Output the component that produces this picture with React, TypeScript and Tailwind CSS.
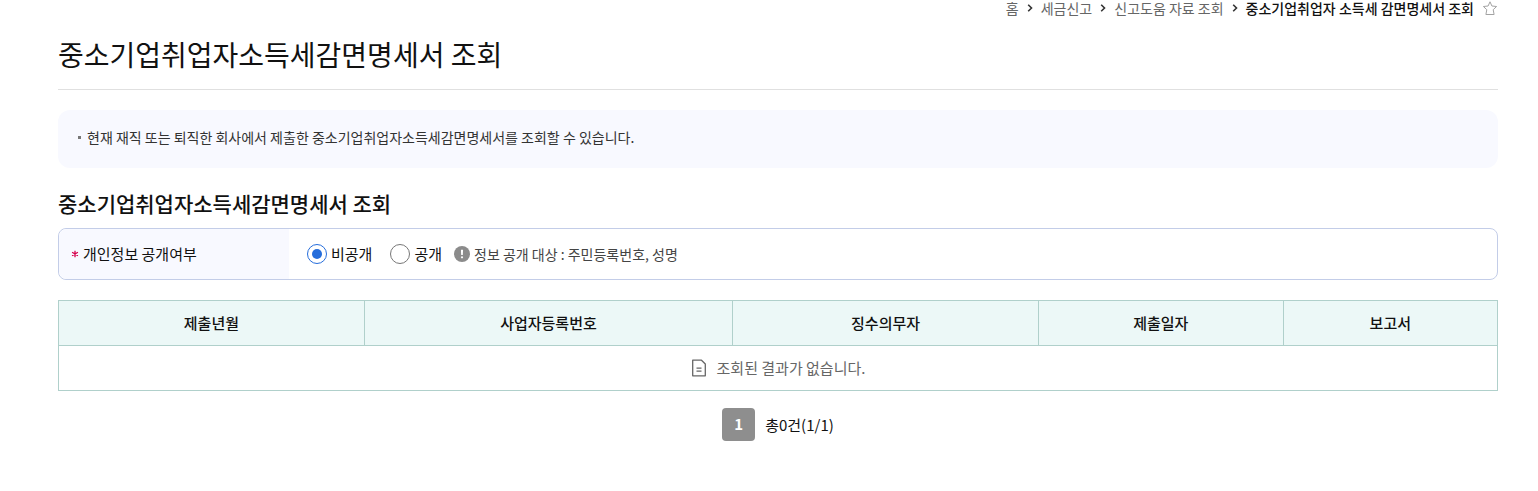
import { Fragment, useState } from "react";

const breadcrumbs = ["홈", "세금신고", "신고도움 자료 조회"];

const columns = [
  { label: "제출년월", width: "w-[21.25%]" },
  { label: "사업자등록번호", width: "w-[25.6%]" },
  { label: "징수의무자", width: "w-[21.25%]" },
  { label: "제출일자", width: "w-[17%]" },
  { label: "보고서", width: "w-[14.9%]" },
];

const disclosureOptions = [
  { value: "private", label: "비공개" },
  { value: "public", label: "공개" },
];

const ChevronIcon = () => (
  <svg className="h-2 w-1.5" viewBox="0 0 6 8" fill="none" aria-hidden="true">
    <path d="M1.2 0.8 4.5 4 1.2 7.2" stroke="#333" strokeWidth="1.6" />
  </svg>
);

const StarIcon = () => (
  <svg className="h-4 w-4" viewBox="0 0 16 16" fill="none" aria-hidden="true">
    <path
      d="M8 1.8 9.9 6l4.7.5-3.4 3.2.9 4.8H3.9l.9-4.8L1.4 6.5 6.1 6Z"
      stroke="#a3a3a3"
      strokeLinejoin="round"
    />
  </svg>
);

const RequiredIcon = () => (
  <svg
    className="h-2 w-2"
    viewBox="0 0 8 8"
    stroke="#d6004c"
    strokeWidth="1.3"
    role="img"
    aria-label="필수"
  >
    <path d="M4 .7v6.6M1.1 2.3l5.8 3.4M6.9 2.3 1.1 5.7" />
  </svg>
);

const InfoIcon = () => (
  <svg className="h-4 w-4" viewBox="0 0 16 16" aria-hidden="true">
    <circle cx="8" cy="8" r="8" fill="#8b8b8b" />
    <path d="M6.9 3.8h2.2L8.8 9H7.2Z" fill="#fff" />
    <circle cx="8" cy="11.3" r="1.1" fill="#fff" />
  </svg>
);

const DocumentIcon = () => (
  <svg
    className="h-[18px] w-4"
    viewBox="0 0 16 18"
    fill="none"
    stroke="#666"
    strokeWidth="1.3"
    aria-hidden="true"
  >
    <path d="M1.7 1.2h8.8l3.8 3.8v11.8H1.7Z" strokeLinejoin="round" />
    <path d="M5.5 9.2h5M5.5 12.2h5" />
  </svg>
);

const Breadcrumb = () => (
  <nav
    aria-label="breadcrumb"
    className="flex items-center justify-end gap-2 text-sm leading-4 text-[#666]"
  >
    {breadcrumbs.map((item) => (
      <Fragment key={item}>
        <a href="#" className="hover:underline">
          {item}
        </a>
        <ChevronIcon />
      </Fragment>
    ))}
    <strong className="font-medium text-[#111]">
      중소기업취업자 소득세 감면명세서 조회
    </strong>
    <button type="button" aria-label="즐겨찾기">
      <StarIcon />
    </button>
  </nav>
);

const DisclosureForm = () => {
  const [disclosure, setDisclosure] = useState("private");

  return (
    <fieldset
      aria-labelledby="disclosure-label"
      className="flex h-[52px] overflow-hidden rounded-lg border border-[#c3cde8] text-[15px]"
    >
      <div
        id="disclosure-label"
        className="flex w-[230px] shrink-0 items-center gap-1 bg-[#f8f9ff] pl-3 text-[#111]"
      >
        <RequiredIcon />
        개인정보 공개여부
      </div>
      <div className="flex items-center gap-[18px] pl-[18px]">
        {disclosureOptions.map(({ value, label }) => (
          <label key={value} className="flex items-center gap-1 text-[#111]">
            <input
              type="radio"
              name="disclosure"
              value={value}
              checked={disclosure === value}
              onChange={() => setDisclosure(value)}
              className="h-5 w-5 appearance-none rounded-full border border-[#777] bg-white bg-clip-content p-1 checked:border-[#256ddb] checked:bg-[#256ddb]"
            />
            {label}
          </label>
        ))}
      </div>
      <p className="flex items-center gap-1 pl-3 text-sm text-[#444]">
        <InfoIcon />
        정보 공개 대상 : 주민등록번호, 성명
      </p>
    </fieldset>
  );
};

const ResultTable = () => (
  <table className="mt-5 w-full table-fixed border-collapse border border-[#b0d0cb] text-[15px]">
    <thead>
      <tr className="h-[45px] bg-[#ecf8f7]">
        {columns.map(({ label, width }) => (
          <th
            key={label}
            scope="col"
            className={`border border-[#b0d0cb] font-medium text-[#111] ${width}`}
          >
            {label}
          </th>
        ))}
      </tr>
    </thead>
    <tbody>
      <tr className="h-[45px]">
        <td colSpan={columns.length} className="border border-[#b0d0cb]">
          <div className="flex items-center justify-center gap-2.5 text-[#666]">
            <DocumentIcon />
            조회된 결과가 없습니다.
          </div>
        </td>
      </tr>
    </tbody>
  </table>
);

export default function App() {
  return (
    <main className="bg-white pr-10 pb-12 pl-[58px] font-['Noto_Sans_CJK_KR',sans-serif] text-[#111]">
      <Breadcrumb />
      <h1 className="mt-4 border-b border-[#e0e0e0] pb-3 text-[28px] leading-[45px]">
        중소기업취업자소득세감면명세서 조회
      </h1>

      <ul className="mt-5 rounded-xl bg-[#f8f9ff] px-5 pt-4 pb-5 text-sm leading-[22px] text-[#333]">
        <li className="flex items-center gap-1.5">
          <span className="h-[3px] w-[3px] bg-[#777]" />
          현재 재직 또는 퇴직한 회사에서 제출한 중소기업취업자소득세감면명세서를
          조회할 수 있습니다.
        </li>
      </ul>

      <h2 className="mt-5 mb-2.5 text-[21px] leading-[30px] font-medium">
        중소기업취업자소득세감면명세서 조회
      </h2>
      <DisclosureForm />
      <ResultTable />

      <div className="mt-[17px] flex items-center justify-center gap-2.5">
        <button
          type="button"
          aria-current="page"
          className="h-[33px] w-[33px] rounded bg-[#8e8e8e] text-[15px] font-bold text-white"
        >
          1
        </button>
        <span className="pt-0.5 text-[15px]">총0건(1/1)</span>
      </div>
    </main>
  );
}
